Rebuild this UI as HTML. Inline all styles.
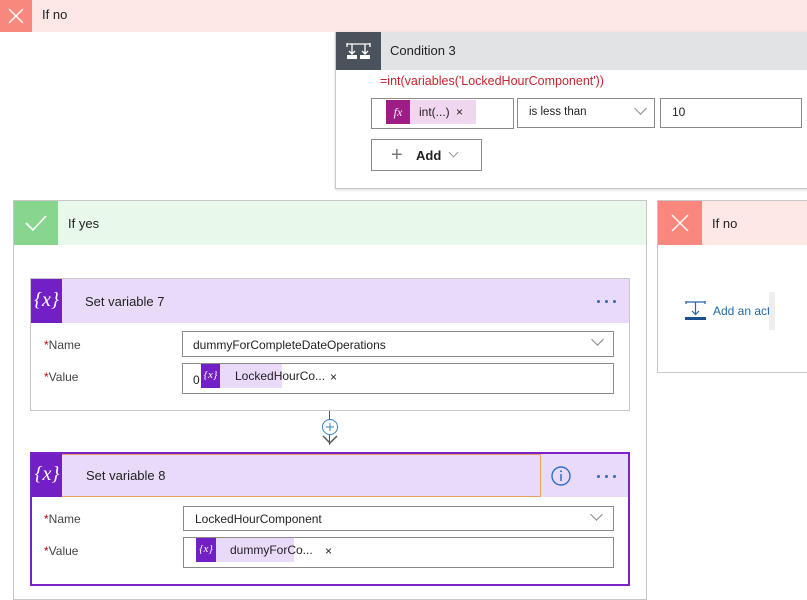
<!DOCTYPE html>
<html><head><style>
*{box-sizing:border-box;margin:0;padding:0}
body{width:807px;height:586px;overflow:hidden;background:#fff;font-family:"Liberation Sans",sans-serif;font-size:12px;color:#222;position:relative}
.a{position:absolute}
.inp{position:absolute;border:1px solid #8a8a8a;background:#fff}
.lbl{position:absolute;font-size:12px;color:#444}
.lbl b{color:#c00;font-weight:normal}
.chev{position:absolute;width:9px;height:9px;border-right:1px solid #888;border-bottom:1px solid #888;transform:rotate(45deg)}
.vx{position:absolute;background:#7220c6;color:#fff;font-family:"Liberation Serif",serif;font-style:italic;text-align:center}
.dots{position:absolute;width:22px;height:4px}
.dots i{position:absolute;top:0;width:3px;height:3px;border-radius:50%;background:#2b6cb0}
</style></head><body>
<div class="a" style="left:0;top:0;width:807px;height:32px;background:#fde8e6"></div>
<div class="a" style="left:0;top:0;width:32px;height:32px;background:#f8877d"></div>
<svg class="a" style="left:0;top:0" width="32" height="32"><path d="M9 9L23 23M23 9L9 23" stroke="#fff" stroke-width="1.3"/></svg>
<div class="a" style="left:42px;top:7px;font-size:13px">If no</div>

<div class="a" style="left:335px;top:32px;width:480px;height:157px;border:1px solid #c8c8c8;background:#fff;box-shadow:0 1px 3px rgba(0,0,0,.15)"></div>
<div class="a" style="left:336px;top:32px;width:471px;height:38px;background:#e2e3e5"></div>
<div class="a" style="left:336px;top:32px;width:45px;height:38px;background:#4a525b"></div>
<svg class="a" style="left:336px;top:32px" width="45" height="38"><g stroke="#fff" fill="none" stroke-width="1.3"><path d="M11 12H34M11 11V15M34 11V15M16 12V22M29 12V22M13 19L16 22L19 19M26 19L29 22L32 19"/></g><rect x="11" y="23" width="10" height="4" fill="#fff"/><rect x="24" y="23" width="10" height="4" fill="#fff"/></svg>
<div class="a" style="left:390px;top:43px;font-size:13px">Condition 3</div>
<div class="a" style="left:380px;top:74px;font-size:12.5px;color:#c4262e">=int(variables('LockedHourComponent'))</div>
<div class="inp" style="left:371px;top:98px;width:143px;height:31px"></div>
<div class="a" style="left:386px;top:100px;width:90px;height:24px;background:#f0d6ee"></div>
<div class="a" style="left:386px;top:100px;width:24px;height:24px;background:#9e1c86;color:#fff;font-family:'Liberation Serif',serif;font-style:italic;font-size:12px;text-align:center;line-height:24px">fx</div>
<div class="a" style="left:419px;top:105px;font-size:12px">int(...)</div>
<div class="a" style="left:456px;top:105px;font-size:12px">×</div>
<div class="inp" style="left:517px;top:98px;width:138px;height:30px"></div>
<div class="a" style="left:529px;top:106px;font-size:11.5px">is less than</div>
<div class="chev" style="left:636px;top:104px"></div>
<div class="inp" style="left:660px;top:98px;width:142px;height:30px"></div>
<div class="a" style="left:672px;top:105px;font-size:12px">10</div>
<div class="inp" style="left:371px;top:139px;width:111px;height:32px"></div>
<div class="a" style="left:391px;top:145px;font-size:20px;color:#777;line-height:20px">+</div>
<div class="a" style="left:416px;top:148px;font-size:13px;font-weight:bold">Add</div>
<div class="chev" style="left:450px;top:149px;width:7px;height:7px;border-color:#999"></div>

<div class="a" style="left:13px;top:200px;width:634px;height:400px;border:1px solid #c8c8c8;background:#fff"></div>
<div class="a" style="left:14px;top:201px;width:632px;height:44px;background:#e8f8ea"></div>
<div class="a" style="left:14px;top:201px;width:44px;height:44px;background:#88d68e"></div>
<svg class="a" style="left:14px;top:201px" width="44" height="44"><path d="M12 22L19 29L32 15" stroke="#fff" stroke-width="1.6" fill="none"/></svg>
<div class="a" style="left:68px;top:216px;font-size:13px">If yes</div>

<div class="a" style="left:30px;top:278px;width:600px;height:133px;border:1px solid #c8c8c8;background:#fff"></div>
<div class="a" style="left:31px;top:279px;width:598px;height:44px;background:#e9dafa"></div>
<div class="vx" style="left:31px;top:279px;width:31px;height:44px;font-size:20px;line-height:42px">{<i>x</i>}</div>
<div class="a" style="left:85px;top:294px;font-size:13px">Set variable 7</div>
<div class="dots" style="left:597px;top:300px"><i style="left:0"></i><i style="left:8px"></i><i style="left:16px"></i></div>
<div class="lbl" style="left:44px;top:338px"><b>*</b>Name</div>
<div class="inp" style="left:182px;top:331px;width:432px;height:26px"></div>
<div class="a" style="left:193px;top:338px;font-size:12px">dummyForCompleteDateOperations</div>
<div class="chev" style="left:593px;top:335px"></div>
<div class="lbl" style="left:44px;top:370px"><b>*</b>Value</div>
<div class="inp" style="left:182px;top:363px;width:432px;height:31px"></div>
<div class="a" style="left:193px;top:373px;font-size:12px">0</div>
<div class="a" style="left:201px;top:364px;width:81px;height:24px;background:#e9dafa"></div>
<div class="vx" style="left:201px;top:364px;width:19px;height:24px;font-size:11px;line-height:22px">{<i>x</i>}</div>
<div class="a" style="left:235px;top:369px;font-size:12px">LockedHourCo...</div>
<div class="a" style="left:330px;top:370px;font-size:12px">×</div>

<div class="a" style="left:329px;top:411px;width:1px;height:34px;background:#555"></div>
<svg class="a" style="left:318px;top:415px" width="24" height="34"><circle cx="12" cy="12" r="7.5" fill="#fff" stroke="#2f86c6" stroke-width="1"/><path d="M12 8V16M8 12H16" stroke="#2f86c6"/><path d="M5 21L12 28L19 21" stroke="#555" stroke-width="1.5" fill="none"/></svg>

<div class="a" style="left:30px;top:452px;width:600px;height:134px;border:2px solid #7b22c8;background:#fff"></div>
<div class="a" style="left:32px;top:454px;width:596px;height:43px;background:#e9dafa"></div>
<div class="a" style="left:32px;top:454px;width:509px;height:43px;border:1px solid #e8a060"></div>
<div class="vx" style="left:32px;top:454px;width:30px;height:43px;font-size:20px;line-height:41px">{<i>x</i>}</div>
<div class="a" style="left:86px;top:468px;font-size:13px">Set variable 8</div>
<svg class="a" style="left:549px;top:464px" width="24" height="24"><circle cx="12" cy="12" r="9" fill="none" stroke="#2f6fc6" stroke-width="1.4"/><path d="M12 10V17" stroke="#2f6fc6" stroke-width="1.5"/><circle cx="12" cy="7.3" r="1" fill="#2f6fc6"/></svg>
<div class="dots" style="left:597px;top:475px"><i style="left:0"></i><i style="left:8px"></i><i style="left:16px"></i></div>
<div class="lbl" style="left:44px;top:512px"><b>*</b>Name</div>
<div class="inp" style="left:183px;top:506px;width:431px;height:25px"></div>
<div class="a" style="left:195px;top:512px;font-size:12px">LockedHourComponent</div>
<div class="chev" style="left:592px;top:510px"></div>
<div class="lbl" style="left:44px;top:544px"><b>*</b>Value</div>
<div class="inp" style="left:183px;top:537px;width:431px;height:31px"></div>
<div class="a" style="left:196px;top:538px;width:98px;height:24px;background:#e9dafa"></div>
<div class="vx" style="left:196px;top:538px;width:20px;height:24px;font-size:11px;line-height:22px">{<i>x</i>}</div>
<div class="a" style="left:230px;top:543px;font-size:12px">dummyForCo...</div>
<div class="a" style="left:325px;top:544px;font-size:12px">×</div>

<div class="a" style="left:657px;top:200px;width:160px;height:173px;border:1px solid #c8c8c8;background:#fff"></div>
<div class="a" style="left:658px;top:201px;width:149px;height:44px;background:#fde8e6"></div>
<div class="a" style="left:658px;top:201px;width:44px;height:44px;background:#f8877d"></div>
<svg class="a" style="left:658px;top:201px" width="44" height="44"><path d="M14 14L30 30M30 14L14 30" stroke="#fff" stroke-width="1.3"/></svg>
<div class="a" style="left:712px;top:216px;font-size:13px">If no</div>
<svg class="a" style="left:685px;top:300px" width="22" height="22"><path d="M1 2H20M1 1V4M20 1V4M10.5 2V14M7 11L10.5 14.5L14 11" stroke="#2565a8" fill="none" stroke-width="1.2"/><rect x="0" y="17" width="21" height="3" fill="#1a4f8c"/></svg>
<div class="a" style="left:713px;top:304px;font-size:12px;color:#1f6aa8">Add an act</div>
<div class="a" style="left:769px;top:292px;width:6px;height:38px;background:#eee"></div>
</body></html>
